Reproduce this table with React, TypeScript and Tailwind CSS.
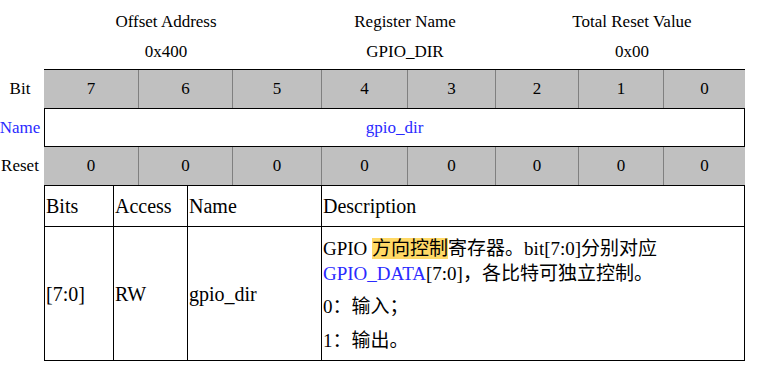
const bits = [
  { n: 7, w: "w-[94px]" },
  { n: 6, w: "w-[94px]" },
  { n: 5, w: "w-[89px]" },
  { n: 4, w: "w-[86px]" },
  { n: 3, w: "w-[88px]" },
  { n: 2, w: "w-[83px]" },
  { n: 1, w: "w-[85px]" },
  { n: 0, w: "w-[82px]" },
];

function Summary() {
  return (
    <div className="grid grid-cols-[244px_234px_220px] pl-[44px] pt-[10px] text-[17px] text-black">
      <div className="text-center leading-[24px]">Offset Address</div>
      <div className="text-center leading-[24px]">Register Name</div>
      <div className="text-center leading-[24px]">Total Reset Value</div>
      <div className="text-center leading-[24px] mt-[6px]">0x400</div>
      <div className="text-center leading-[24px] mt-[6px]">GPIO_DIR</div>
      <div className="text-center leading-[24px] mt-[6px]">0x00</div>
    </div>
  );
}

function RegisterMap() {
  return (
    <div className="mt-[5px] text-[17px]">
      <div className="flex h-[39px]">
        <div className="w-[44px] flex items-center justify-center pr-[4px]">Bit</div>
        <div className="flex bg-[#c0c0c0] border-t border-black">
          {bits.map((b, i) => (
            <div
              key={b.n}
              className={`${b.w} flex items-center justify-center ${i > 0 ? "border-l border-[#808080]" : ""}`}
            >
              {b.n}
            </div>
          ))}
        </div>
      </div>
      <div className="flex h-[39px]">
        <div className="w-[44px] flex items-center justify-center pr-[4px] text-[#2a2aff]">Name</div>
        <div className="w-[701px] flex items-center justify-center border border-black text-[#2a2aff]">
          gpio_dir
        </div>
      </div>
      <div className="flex h-[38px]">
        <div className="w-[44px] flex items-center justify-center pr-[4px]">Reset</div>
        <div className="flex bg-[#c0c0c0]">
          {bits.map((b, i) => (
            <div
              key={b.n}
              className={`${b.w} flex items-center justify-center ${i > 0 ? "border-l border-[#808080]" : ""}`}
            >
              0
            </div>
          ))}
        </div>
      </div>
    </div>
  );
}

function FieldTable() {
  const cjk = "font-['Liberation_Serif','Noto_Sans_CJK_SC',serif]";
  return (
    <div className={`ml-[44px] w-[701px] border border-black grid grid-cols-[69px_74px_134px_1fr] text-[20px] ${cjk}`}>
      <div className="h-[41px] flex items-center pl-[1px] border-r border-b border-black">Bits</div>
      <div className="h-[41px] flex items-center pl-[1px] border-r border-b border-black">Access</div>
      <div className="h-[41px] flex items-center pl-[1px] border-r border-b border-black">Name</div>
      <div className="h-[41px] flex items-center pl-[1px] border-b border-black">Description</div>

      <div className="h-[133px] flex items-center pl-[1px] border-r border-black">[7:0]</div>
      <div className="h-[133px] flex items-center pl-[1px] border-r border-black">RW</div>
      <div className="h-[133px] flex items-center pl-[1px] border-r border-black">gpio_dir</div>
      <div className="h-[133px] pl-[1px] pt-[9px] whitespace-nowrap text-[19px]">
        <p className="leading-[25px]">
          GPIO <span className="bg-[#ffd966]">方向控制</span>寄存器。bit[7:0]分别对应
          <br />
          <span className="text-[#2a2aff]">GPIO_DATA</span>[7:0]，各比特可独立控制。
        </p>
        <p className="leading-[34px] mt-[4px]">0：输入；</p>
        <p className="leading-[34px]">1：输出。</p>
      </div>
    </div>
  );
}

export default function App() {
  return (
    <div className="w-[762px] h-[368px] bg-white text-black font-['Liberation_Serif',serif]">
      <Summary />
      <RegisterMap />
      <FieldTable />
    </div>
  );
}
